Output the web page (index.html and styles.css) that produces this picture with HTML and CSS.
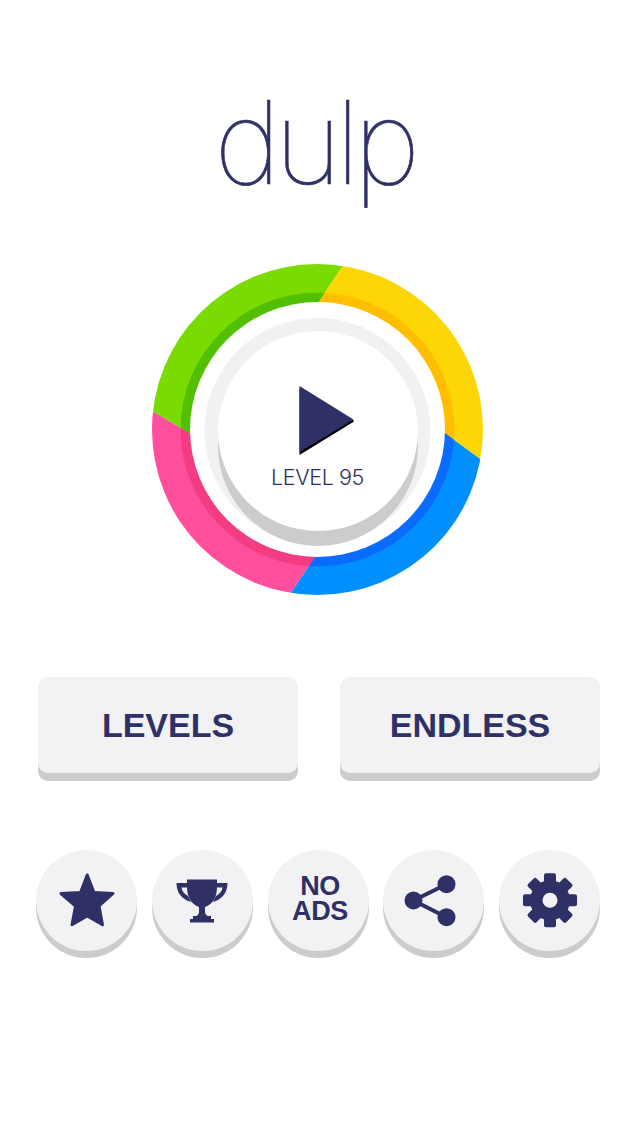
FILE: index.html
```html
<!DOCTYPE html>
<html lang="en">
<head>
    <meta charset="UTF-8">
    <meta name="viewport" content="width=device-width, initial-scale=1.0">
    <title>dulp</title>
    <link rel="stylesheet" href="styles.css">
</head>
<body>

<div class="container">
    <!-- Logo -->
    <h1 class="logo">dulp</h1>

    <!-- Colour wheel with play button -->
    <svg class="wheel" viewBox="-169.5 -169.5 340 340">
        <defs>
            <clipPath id="wedgeYellow"><polygon points="0,0 1.2,-127.8 36,-180 185,-185 185,46 127.5,3.8"/></clipPath>
            <clipPath id="wedgeBlue"><polygon points="0,0 127.5,3.8 185,46 185,185 -38,180 -2.5,127.2"/></clipPath>
            <clipPath id="wedgePink"><polygon points="0,0 -2.5,127.2 -38,180 -185,185 -185,-30 -127.5,3.8"/></clipPath>
            <clipPath id="wedgeGreen"><polygon points="0,0 -127.5,3.8 -185,-30 -185,-185 36,-180 1.2,-127.8"/></clipPath>
        </defs>
        <g clip-path="url(#wedgeYellow)">
            <circle class="yellow" r="165.5"/>
            <circle class="yellow-dark" r="137"/>
        </g>
        <g clip-path="url(#wedgeBlue)">
            <circle class="blue" r="165.5"/>
            <circle class="blue-dark" r="137"/>
        </g>
        <g clip-path="url(#wedgePink)">
            <circle class="pink" r="165.5"/>
            <circle class="pink-dark" r="137"/>
        </g>
        <g clip-path="url(#wedgeGreen)">
            <circle class="green" r="165.5"/>
            <circle class="green-dark" r="137"/>
        </g>
        <circle class="white" r="127.5"/>
        <circle class="face" cy="1.5" r="113"/>
        <circle class="edge" cx="0.5" cy="16.5" r="100"/>
        <circle class="white" cx="0.5" cy="1.5" r="100"/>
        <polygon class="play-shadow" points="-18,-41 36,-9 36.5,-8 -18,25.5"/>
        <polygon class="ink" points="-18,-43.5 36,-10 -18,22.5"/>
        <text class="level" x="0" y="55.5" text-anchor="middle">LEVEL 95</text>
    </svg>

    <!-- Mode buttons -->
    <div class="modes">
        <button class="mode-btn">LEVELS</button>
        <button class="mode-btn">ENDLESS</button>
    </div>

    <!-- Round buttons -->
    <div class="tools">
        <button class="tool-btn">
            <svg class="icon" viewBox="0 0 60 60">
                <polygon class="ink-round" points="30.2,4 37,21.5 56,22.5 42,35 45.5,53.7 30.2,45 15,53.7 18.5,35 4,22.5 23.5,21.5"/>
            </svg>
        </button>
        <button class="tool-btn">
            <svg class="icon" viewBox="0 0 60 60">
                <path class="ink" d="M15 8.5H45V16C45 26 41 33 33 36V41C33 43 35 45 36 45H24C25 45 27 43 27 41V36C19 33 15 26 15 16Z"/>
                <path class="ink" d="M15 12H4.5C4.5 21 9 28 19 31L16 25C12 23 10 20 9.5 16.5H15Z"/>
                <path class="ink" d="M45 12H55.5C55.5 21 51 28 41 31L44 25C48 23 50 20 50.5 16.5H45Z"/>
                <rect class="ink" x="21" y="45" width="18" height="3"/>
                <rect class="ink" x="18" y="48" width="24" height="3.5"/>
            </svg>
        </button>
        <button class="tool-btn tool-text">
            <span class="tool-line">NO</span>
            <span class="tool-line">ADS</span>
        </button>
        <button class="tool-btn">
            <svg class="icon" viewBox="0 0 60 60">
                <path class="share-line" d="M42.5 13.2L9.5 29.5L42.5 46.2"/>
                <circle class="ink" cx="42.5" cy="13.2" r="9"/>
                <circle class="ink" cx="9.5" cy="29.5" r="9"/>
                <circle class="ink" cx="42.5" cy="46.2" r="9"/>
            </svg>
        </button>
        <button class="tool-btn">
            <svg class="icon" viewBox="-30 -29.3 60 60">
                <circle class="ink" r="20"/>
                <rect class="ink" x="-6" y="-27" width="12" height="54" rx="2"/>
                <rect class="ink" x="-6" y="-27" width="12" height="54" rx="2" transform="rotate(45)"/>
                <rect class="ink" x="-6" y="-27" width="12" height="54" rx="2" transform="rotate(90)"/>
                <rect class="ink" x="-6" y="-27" width="12" height="54" rx="2" transform="rotate(135)"/>
                <circle class="gear-hole" r="7.5"/>
            </svg>
        </button>
    </div>
</div>

</body>
</html>
```

FILE: styles.css
```css
body {
    font-family: "Liberation Sans", Arial, sans-serif;
    margin: 0;
    background-color: #fff;
    color: #2f3066;
}
.container {
    width: 640px;
    height: 1136px;
    overflow: hidden;
}
.logo {
    margin: 0;
    height: 260px;
    padding-top: 78px;
    padding-right: 12px;
    box-sizing: border-box;
    text-align: center;
    font-family: Inter, "Liberation Sans", sans-serif;
    font-size: 115px;
    font-weight: 100;
    -webkit-text-stroke: 0.6px #2f3066;
    line-height: 130px;
    letter-spacing: -6.5px;
}
.wheel {
    display: block;
    width: 340px;
    height: 340px;
    margin-left: 148px;
}
.yellow { fill: #ffd605; }
.yellow-dark { fill: #ffbe00; }
.blue { fill: #008fff; }
.blue-dark { fill: #0a6cff; }
.pink { fill: #ff4f9c; }
.pink-dark { fill: #f33c82; }
.green { fill: #7adb00; }
.green-dark { fill: #52c000; }
.white { fill: #fff; }
.face { fill: #f1f1f1; }
.edge { fill: #cccccc; }
.ink { fill: #2f3066; }
.ink-round {
    fill: #2f3066;
    stroke: #2f3066;
    stroke-width: 3;
    stroke-linejoin: round;
}
.play-shadow { fill: #000; }
.level {
    font-family: Inter, "Liberation Sans", sans-serif;
    font-size: 21.5px;
    font-weight: 300;
    letter-spacing: -0.4px;
    fill: #2f3066;
}
.modes {
    display: flex;
    justify-content: space-between;
    margin: 77px 40px 0 38px;
}
.mode-btn {
    width: 260px;
    height: 96px;
    margin-bottom: 8px;
    padding: 0;
    border: none;
    border-radius: 10px;
    background-color: #f2f2f4;
    box-shadow: 0 8px 0 #cccccc;
    color: #2f3066;
    font-family: inherit;
    font-size: 34px;
    font-weight: bold;
}
.tools {
    display: flex;
    justify-content: space-between;
    margin: 69px 40px 0 36px;
}
.tool-btn {
    display: flex;
    align-items: center;
    justify-content: center;
    width: 101px;
    height: 101px;
    padding: 0;
    border: none;
    border-radius: 50%;
    background-color: #f2f2f4;
    box-shadow: 0 7px 0 #cccccc;
    color: #2f3066;
    font-family: inherit;
}
.tool-text {
    flex-direction: column;
    padding: 0 0 3px 4px;
    box-sizing: border-box;
    font-size: 27px;
    font-weight: bold;
    letter-spacing: -0.4px;
}
.tool-line {
    display: block;
    height: 25px;
    line-height: 25px;
}
.icon {
    width: 60px;
    height: 60px;
}
.share-line {
    fill: none;
    stroke: #2f3066;
    stroke-width: 4;
}
.gear-hole { fill: #f2f2f4; }
```
